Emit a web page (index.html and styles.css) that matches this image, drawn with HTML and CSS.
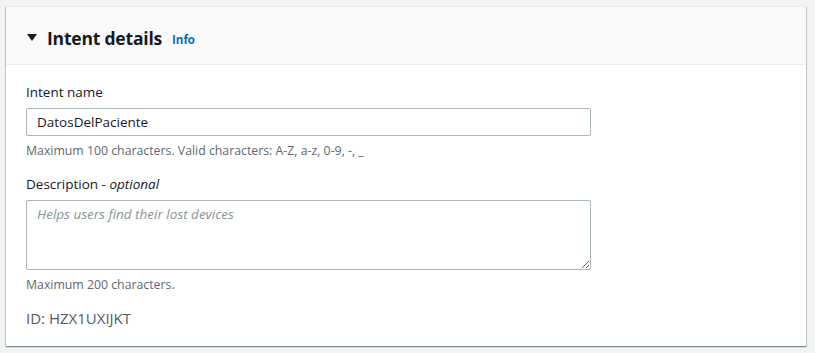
FILE: index.html
```html
<!DOCTYPE html>
<html lang="en">
<head>
    <meta charset="UTF-8">
    <meta name="viewport" content="width=device-width, initial-scale=1.0">
    <title>Intent details</title>
    <link rel="stylesheet" href="styles.css">
</head>
<body>
    <div class="panel">
        <div class="panel-header">
            <span class="caret"></span>
            <h2>Intent details</h2>
            <a class="info">Info</a>
        </div>
        <div class="panel-body">
            <div class="field">
                <label for="intent-name">Intent name</label>
                <input type="text" id="intent-name" value="DatosDelPaciente">
                <p class="hint">Maximum 100 characters. Valid characters: A-Z, a-z, 0-9, -, _</p>
            </div>
            <div class="field">
                <label for="description">Description - <i>optional</i></label>
                <textarea id="description" placeholder="Helps users find their lost devices"></textarea>
                <p class="hint">Maximum 200 characters.</p>
            </div>
            <div class="intent-id">ID: HZX1UXIJKT</div>
        </div>
    </div>
</body>
</html>
```

FILE: styles.css
```css
body { font-family: "Open Sans", "Liberation Sans", sans-serif; margin: 0; padding: 6px 9px 6px 6px; background-color: #f2f3f3; color: #16191f; }
.panel { background: white; border-top: 1px solid #eaeded; box-shadow: 0 1px 1px 0 rgba(0, 28, 36, 0.3), 1px 1px 1px 0 rgba(0, 28, 36, 0.15), -1px 1px 1px 0 rgba(0, 28, 36, 0.15); }
.panel-header { display: flex; align-items: center; height: 58px; box-sizing: border-box; padding: 4px 20px 0 21px; background-color: #fafafa; border-bottom: 1px solid #eaeded; }
.caret { width: 0; height: 0; border-left: 5px solid transparent; border-right: 5px solid transparent; border-top: 7px solid #16191f; margin-right: 10px; }
.panel-header h2 { margin: 0; font-size: 17.5px; font-weight: 700; line-height: 22px; letter-spacing: -0.2px; }
.info { color: #0073bb; font-size: 11.5px; font-weight: 700; margin-left: 10px; margin-top: 3px; cursor: pointer; }
.panel-body { padding: 17px 20px 18px 20px; }
.field { margin-bottom: 16px; }
label { display: block; font-size: 13.5px; line-height: 20px; margin-bottom: 6px; }
input, textarea { display: block; box-sizing: border-box; width: 565px; font-family: inherit; font-size: 13.5px; color: #16191f; border: 1px solid #aab7b8; border-radius: 2px; margin: 0; }
input { height: 28px; padding: 3px 10px; }
textarea { height: 70px; padding: 4px 10px; resize: vertical; }
textarea::placeholder { color: #879596; font-style: italic; }
.hint { margin: 7px 0 0; font-size: 12.3px; line-height: 15px; color: #5f6870; }
.intent-id { font-size: 15px; color: #545b64; line-height: 20px; margin-top: 8px; }
```
